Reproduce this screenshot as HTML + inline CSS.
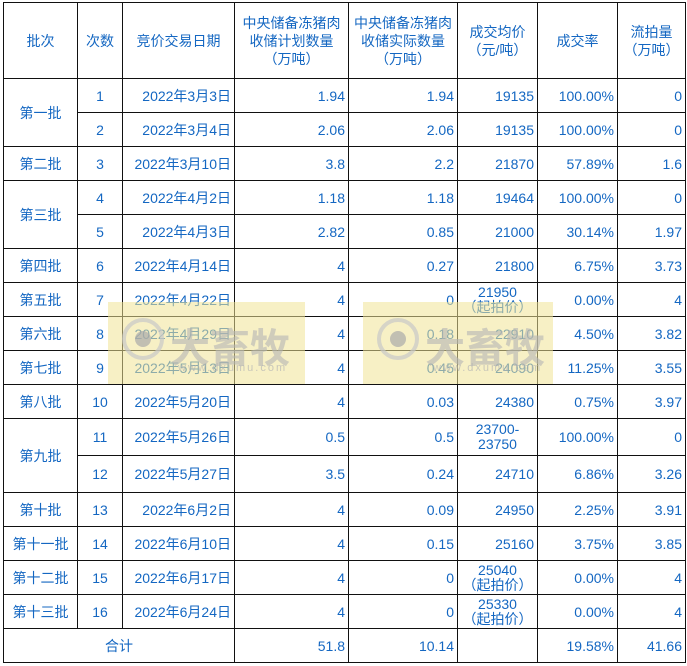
<!DOCTYPE html>
<html><head><meta charset="utf-8"><style>
body{margin:0;background:#fff;width:687px;height:666px;overflow:hidden;position:relative;font-family:"Liberation Sans","Noto Sans CJK SC",sans-serif;}
table{position:absolute;left:3px;top:2px;border-collapse:collapse;table-layout:fixed;color:#1467c2;font-size:14px;}
td{border:1px solid #111;padding:0 3px;height:33px;text-align:right;white-space:nowrap;line-height:16px;overflow:hidden;}
td.c{text-align:center}
tr.h td{height:75px;text-align:center;line-height:18px;}
tr.t td{height:36px}
td.s{line-height:15px;text-align:center;padding:0}
.wm{position:absolute;background:rgba(240,228,150,0.55);overflow:hidden;white-space:nowrap}
.wm .o{position:absolute;left:14px;top:16px;width:42px;height:42px;border-radius:50%;border:4px solid rgba(200,200,200,0.7);box-sizing:border-box}
.wm .o:after{content:"";position:absolute;left:9px;top:9px;width:16px;height:16px;border-radius:50%;background:rgba(170,170,170,0.7)}
.wm .t{position:absolute;left:62px;top:14px;font-size:40px;font-weight:bold;color:rgba(180,180,180,0.6);letter-spacing:0px}
.wm .u{position:absolute;left:70px;top:60px;font-size:11px;color:rgba(180,180,180,0.7);letter-spacing:2px}
</style></head><body>
<table>
<colgroup><col style="width:74px"><col style="width:45px"><col style="width:112px"><col style="width:114px"><col style="width:109px"><col style="width:80px"><col style="width:80px"><col style="width:68px"></colgroup>
<tr class="h"><td>批次</td><td>次数</td><td>竞价交易日期</td><td>中央储备冻猪肉<br>收储计划数量<br>（万吨）</td><td>中央储备冻猪肉<br>收储实际数量<br>（万吨）</td><td>成交均价<br>（元/吨）</td><td>成交率</td><td>流拍量<br>（万吨）</td></tr>
<tr><td class="c" rowspan="2">第一批</td><td class="c">1</td><td>2022年3月3日</td><td>1.94</td><td>1.94</td><td>19135</td><td>100.00%</td><td>0</td></tr>
<tr><td class="c">2</td><td>2022年3月4日</td><td>2.06</td><td>2.06</td><td>19135</td><td>100.00%</td><td>0</td></tr>
<tr><td class="c">第二批</td><td class="c">3</td><td>2022年3月10日</td><td>3.8</td><td>2.2</td><td>21870</td><td>57.89%</td><td>1.6</td></tr>
<tr><td class="c" rowspan="2">第三批</td><td class="c">4</td><td>2022年4月2日</td><td>1.18</td><td>1.18</td><td>19464</td><td>100.00%</td><td>0</td></tr>
<tr><td class="c">5</td><td>2022年4月3日</td><td>2.82</td><td>0.85</td><td>21000</td><td>30.14%</td><td>1.97</td></tr>
<tr><td class="c">第四批</td><td class="c">6</td><td>2022年4月14日</td><td>4</td><td>0.27</td><td>21800</td><td>6.75%</td><td>3.73</td></tr>
<tr><td class="c">第五批</td><td class="c">7</td><td>2022年4月22日</td><td>4</td><td>0</td><td class="s">21950<br>（起拍价）</td><td>0.00%</td><td>4</td></tr>
<tr><td class="c">第六批</td><td class="c">8</td><td>2022年4月29日</td><td>4</td><td>0.18</td><td>22910</td><td>4.50%</td><td>3.82</td></tr>
<tr><td class="c">第七批</td><td class="c">9</td><td>2022年5月13日</td><td>4</td><td>0.45</td><td>24090</td><td>11.25%</td><td>3.55</td></tr>
<tr><td class="c">第八批</td><td class="c">10</td><td>2022年5月20日</td><td>4</td><td>0.03</td><td>24380</td><td>0.75%</td><td>3.97</td></tr>
<tr class="t"><td class="c" rowspan="2">第九批</td><td class="c">11</td><td>2022年5月26日</td><td>0.5</td><td>0.5</td><td class="s">23700-<br>23750</td><td>100.00%</td><td>0</td></tr>
<tr class="t"><td class="c">12</td><td>2022年5月27日</td><td>3.5</td><td>0.24</td><td>24710</td><td>6.86%</td><td>3.26</td></tr>
<tr><td class="c">第十批</td><td class="c">13</td><td>2022年6月2日</td><td>4</td><td>0.09</td><td>24950</td><td>2.25%</td><td>3.91</td></tr>
<tr><td class="c">第十一批</td><td class="c">14</td><td>2022年6月10日</td><td>4</td><td>0.15</td><td>25160</td><td>3.75%</td><td>3.85</td></tr>
<tr><td class="c">第十二批</td><td class="c">15</td><td>2022年6月17日</td><td>4</td><td>0</td><td class="s">25040<br>（起拍价）</td><td>0.00%</td><td>4</td></tr>
<tr><td class="c">第十三批</td><td class="c">16</td><td>2022年6月24日</td><td>4</td><td>0</td><td class="s">25330<br>（起拍价）</td><td>0.00%</td><td>4</td></tr>
<tr><td class="c" colspan="3">合计</td><td>51.8</td><td>10.14</td><td></td><td>19.58%</td><td>41.66</td></tr>
</table>
<div class="wm" style="left:108px;top:302px;width:197px;height:82px"><div class="o"></div><div class="t">大畜牧</div><div class="u">www.dxumu.com</div></div>
<div class="wm" style="left:363px;top:302px;width:190px;height:82px"><div class="o"></div><div class="t">大畜牧</div><div class="u">www.dxumu.com</div></div>
</body></html>
